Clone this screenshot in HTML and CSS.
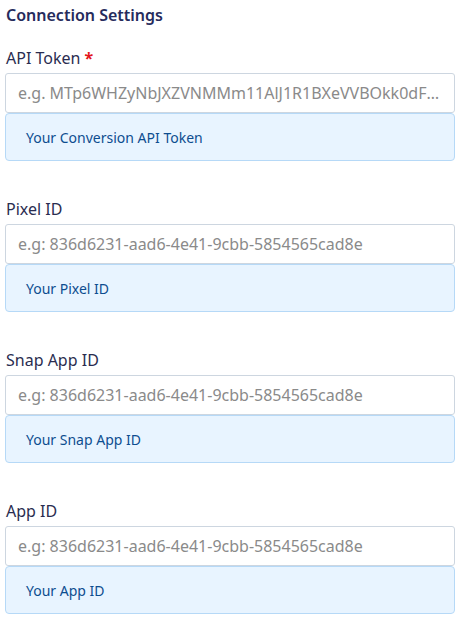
FILE: index.html
```html
<!DOCTYPE html>
<html lang="en">
<head>
<meta charset="utf-8">
<title>Connection Settings</title>
<link rel="stylesheet" href="styles.css">
</head>
<body>
<div class="panel">
  <h2 class="title">Connection Settings</h2>

  <div class="field">
    <label class="label" for="api-token">API Token <span class="req">*</span></label>
    <input class="input" id="api-token" type="text" placeholder="e.g. MTp6WHZyNbJXZVNMMm11AlJ1R1BXeVVBOkk0dFdsVmdEQ0RHb2pJd2pDRUhYZ0R4">
    <div class="help">Your Conversion API Token</div>
  </div>

  <div class="field">
    <label class="label" for="pixel-id">Pixel ID</label>
    <input class="input" id="pixel-id" type="text" placeholder="e.g: 836d6231-aad6-4e41-9cbb-5854565cad8e">
    <div class="help">Your Pixel ID</div>
  </div>

  <div class="field">
    <label class="label" for="snap-app-id">Snap App ID</label>
    <input class="input" id="snap-app-id" type="text" placeholder="e.g: 836d6231-aad6-4e41-9cbb-5854565cad8e">
    <div class="help">Your Snap App ID</div>
  </div>

  <div class="field">
    <label class="label" for="app-id">App ID</label>
    <input class="input" id="app-id" type="text" placeholder="e.g: 836d6231-aad6-4e41-9cbb-5854565cad8e">
    <div class="help">Your App ID</div>
  </div>
</div>
</body>
</html>
```

FILE: styles.css
```css
* { box-sizing: border-box; }

html, body {
  margin: 0;
  padding: 0;
  background: #ffffff;
  font-family: "Noto Sans", "Open Sans", sans-serif;
}

.panel {
  padding: 4px 6px 0 5px;
  display: flex;
  flex-direction: column;
  gap: 35px;
}

.title {
  margin: 0 0 -16px 0;
  font-size: 16px;
  line-height: 22px;
  font-weight: 600;
  color: #262b5c;
  padding-left: 1px;
}

.field {
  display: flex;
  flex-direction: column;
}

.label {
  font-size: 16px;
  line-height: 22px;
  font-weight: 400;
  color: #2a2d50;
  padding-top: 2px;
  margin-bottom: 4px;
  padding-left: 1px;
}

.req {
  color: #e3161c;
  font-weight: 700;
}

.input {
  display: block;
  width: 100%;
  height: 40px;
  margin: 0;
  padding: 0 12px;
  border: 1px solid #cdd6e0;
  border-radius: 3px;
  background: #ffffff;
  font-family: "Noto Sans", "Open Sans", sans-serif;
  font-size: 16px;
  color: #333;
  outline: none;
  text-overflow: ellipsis;
}

.input::placeholder {
  color: #8a8a8a;
  opacity: 1;
}

.help {
  height: 48px;
  display: flex;
  align-items: center;
  padding: 0 20px;
  background: #e8f4ff;
  border: 1px solid #b6d9f7;
  border-radius: 4px;
  font-size: 14px;
  color: #0d4d8f;
}
```
